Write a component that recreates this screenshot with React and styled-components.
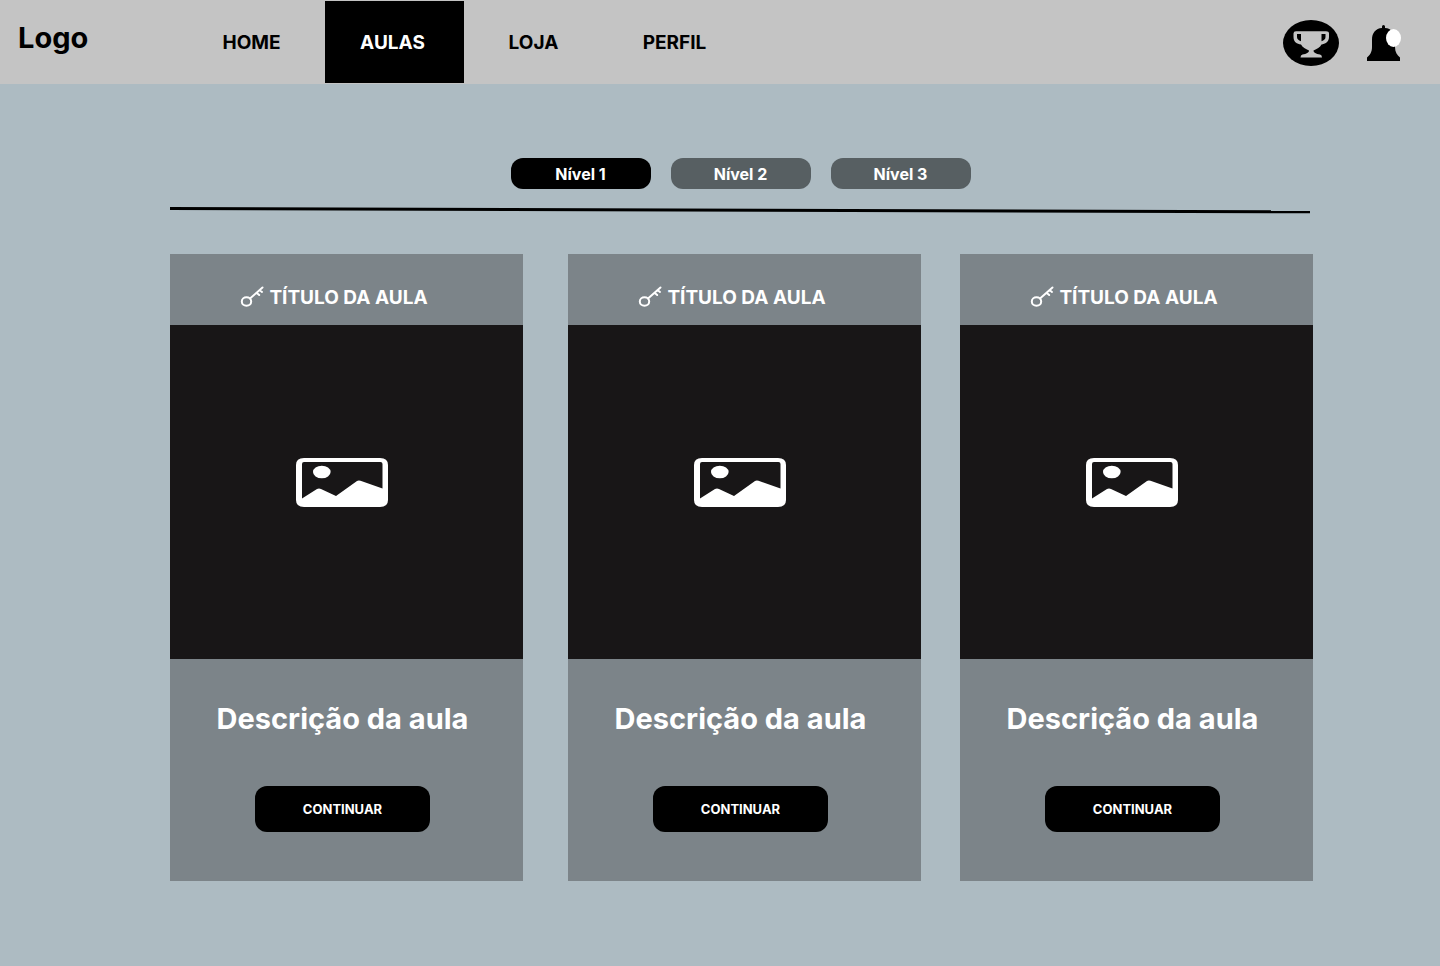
import React from "react";
import styled, { createGlobalStyle } from "styled-components";

const GlobalStyle = createGlobalStyle`
  *, *::before, *::after { box-sizing: border-box; }
  body {
    margin: 0;
    background: #adbbc2;
    color: #000;
    font-family: Inter, Lato, sans-serif;
    font-weight: 700;
  }
`;

const Header = styled.header`
  display: flex;
  align-items: center;
  height: 84px;
  padding: 0 40px 0 18px;
  background: #c4c4c4;
`;

const Logo = styled.a`
  width: 166px;
  padding-bottom: 8px;
  color: #000;
  font-size: 29px;
  line-height: 36px;
  text-decoration: none;
`;

const Nav = styled.nav`
  display: flex;
  gap: 2px;
`;

const NavLink = styled.a`
  display: flex;
  align-items: center;
  justify-content: center;
  width: 139px;
  height: 82px;
  padding: 2px 4px 0 0;
  background: ${(p) => (p.$active ? "#000" : "transparent")};
  color: ${(p) => (p.$active ? "#fff" : "#000")};
  font-size: 19px;
  line-height: 24px;
  text-decoration: none;
`;

const Actions = styled.div`
  display: flex;
  align-items: center;
  gap: 28px;
  margin-left: auto;
  padding-top: 2px;
`;

const IconButton = styled.button`
  display: block;
  padding: 0;
  border: 0;
  background: none;
  cursor: pointer;

  svg { display: block; overflow: visible; }
`;

const Main = styled.main`
  padding: 74px 127px 84px 170px;
`;

const Levels = styled.div`
  display: flex;
  justify-content: center;
  gap: 20px;
  padding-right: 2px;
`;

const LevelButton = styled.button`
  width: 140px;
  height: 31px;
  padding: 0;
  border: 0;
  border-radius: 12px;
  background: ${(p) => (p.$active ? "#000" : "#575f62")};
  color: #fff;
  font: inherit;
  font-size: 16px;
  line-height: 20px;
  cursor: pointer;
`;

const Divider = styled.svg`
  display: block;
  width: 100%;
  height: 7px;
  margin: 18px 0 40px;
  padding-right: 3px;
`;

const Cards = styled.div`
  display: flex;
`;

const Card = styled.article`
  flex: 1;
  margin-left: ${(p) => p.$gap}px;
  background: #7c8489;
  color: #fff;
`;

const CardHeader = styled.header`
  display: flex;
  align-items: center;
  justify-content: center;
  gap: 6px;
  height: 71px;
  padding: 17px 24px 0 0;

  svg { overflow: visible; }
`;

const CardTitle = styled.h2`
  margin: 0;
  font-size: 19px;
  font-weight: 700;
  line-height: 24px;
  white-space: nowrap;
`;

const Preview = styled.div`
  display: flex;
  align-items: center;
  justify-content: center;
  height: 334px;
  padding: 0 9px 20px 0;
  background: #181617;
`;

const CardBody = styled.div`
  display: flex;
  flex-direction: column;
  align-items: center;
  gap: 49px;
  padding: 42px 8px 49px 0;
`;

const Description = styled.p`
  margin: 0;
  font-size: 29px;
  line-height: 36px;
  white-space: nowrap;
`;

const ContinueButton = styled.button`
  width: 175px;
  height: 46px;
  padding: 0;
  border: 0;
  border-radius: 12px;
  background: #000;
  color: #fff;
  font: inherit;
  font-size: 13px;
  line-height: 16px;
  cursor: pointer;
`;

const TrophyIcon = () => (
  <svg width="56" height="46" viewBox="0 0 56 46" aria-hidden="true">
    <ellipse cx="28" cy="23" rx="28" ry="23" fill="#000" />
    <path
      fill="#c4c4c4"
      fillRule="evenodd"
      d="M13 11.200H43Q46 11.200 46 13.500V17C46 22 42 24 38.500 24.500C37 27.500 34 29 30.500 30.500C30.500 32.500 33 34 37 34.600Q39 35 39 37.500H17.500Q17.500 35 19.500 34.600C23.500 34 26 32.500 26 30.500C22.500 29 19.500 27.500 18 24.500C14 24 10.500 22 10.500 17V13.500Q10.500 11.200 13 11.200ZM14 14H18V21.200C15.500 20.500 14 19 14 17ZM38.500 14H42.500V17C42.500 19 41 20.500 38.500 21.200Z"
    />
  </svg>
);

const BellIcon = () => (
  <svg width="33" height="36" viewBox="0 0 33 36" aria-hidden="true">
    <path d="M15 3V1.500Q15 0 16.500 0T18 1.500V3C24.500 3.500 28 8 28 14.500V22C28 27 30 30 33 32.500V36H0V32.500C3 30 5 27 5 22V14.500C5 8 8.500 3.500 15 3Z" />
    <ellipse cx="26.500" cy="13" rx="7.500" ry="9" fill="#fff" />
  </svg>
);

const KeyIcon = () => (
  <svg width="22" height="21" viewBox="0 0 22 21" fill="none" stroke="#fff" strokeWidth="2" strokeLinecap="round" strokeLinejoin="round" aria-hidden="true">
    <ellipse cx="5.500" cy="13.500" rx="4.700" ry="4.200" />
    <path d="M9 10.500 21.500 -0.500M18.500 2 21 4M15.500 4.700 18.200 7" />
  </svg>
);

const PictureIcon = () => (
  <svg width="92" height="49" viewBox="0 0 92 49" aria-hidden="true">
    <path
      fill="#fff"
      fillRule="evenodd"
      d="M8 0H84Q92 0 92 7V42Q92 49 84 49H8Q0 49 0 42V7Q0 0 8 0ZM8 4Q6 4 6 6V40.500L21 31Q23 30 25 31L40 38L61 23Q62.500 22 64.500 22.800L86.500 30.500V6Q86.500 4 84.500 4Z"
    />
    <ellipse cx="25.800" cy="14" rx="8.800" ry="6.300" fill="#fff" />
  </svg>
);

const navItems = ["HOME", "AULAS", "LOJA", "PERFIL"];
const levels = ["Nível 1", "Nível 2", "Nível 3"];
const lessons = [
  { id: 1, gap: 0 },
  { id: 2, gap: 45 },
  { id: 3, gap: 39 },
];

export default function App() {
  return (
    <>
      <GlobalStyle />
      <Header>
        <Logo href="#">Logo</Logo>
        <Nav>
          {navItems.map((item) => (
            <NavLink key={item} href="#" $active={item === "AULAS"}>
              {item}
            </NavLink>
          ))}
        </Nav>
        <Actions>
          <IconButton type="button" aria-label="Conquistas"><TrophyIcon /></IconButton>
          <IconButton type="button" aria-label="Notificações"><BellIcon /></IconButton>
        </Actions>
      </Header>
      <Main>
        <Levels>
          {levels.map((level, i) => (
            <LevelButton key={level} type="button" $active={i === 0}>
              {level}
            </LevelButton>
          ))}
        </Levels>
        <Divider viewBox="0 0 1140 7" preserveAspectRatio="none" aria-hidden="true">
          <path d="M0 1.500 1140 4.800" stroke="#000" strokeWidth="3" />
        </Divider>
        <Cards>
          {lessons.map(({ id, gap }) => (
            <Card key={id} $gap={gap}>
              <CardHeader>
                <KeyIcon />
                <CardTitle>TÍTULO DA AULA</CardTitle>
              </CardHeader>
              <Preview><PictureIcon /></Preview>
              <CardBody>
                <Description>Descrição da aula</Description>
                <ContinueButton type="button">CONTINUAR</ContinueButton>
              </CardBody>
            </Card>
          ))}
        </Cards>
      </Main>
    </>
  );
}
